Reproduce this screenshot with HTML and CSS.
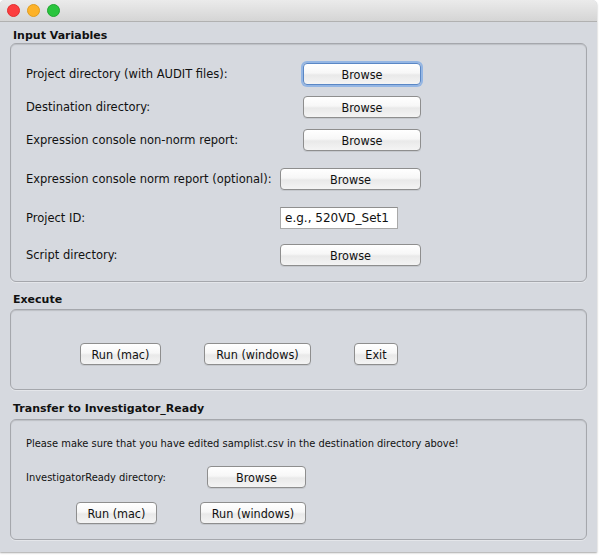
FILE: index.html
```html
<!DOCTYPE html>
<html>
<head>
<meta charset="utf-8">
<link rel="stylesheet" href="styles.css">
</head>
<body>
<div class="window">
  <div class="titlebar">
    <span class="light red"></span>
    <span class="light yellow"></span>
    <span class="light green"></span>
  </div>
  <div class="content">
    <div class="section-title">Input Variables</div>
    <div class="panel panel-input">
      <div class="row r1 wide">
        <span class="label">Project directory (with AUDIT files):</span>
        <button class="btn btn-browse focused">Browse</button>
      </div>
      <div class="row r2 wide">
        <span class="label">Destination directory:</span>
        <button class="btn btn-browse">Browse</button>
      </div>
      <div class="row r3 wide">
        <span class="label">Expression console non-norm report:</span>
        <button class="btn btn-browse">Browse</button>
      </div>
      <div class="row r4 narrow">
        <span class="label">Expression console norm report (optional):</span>
        <button class="btn btn-browse-l">Browse</button>
      </div>
      <div class="row r5 narrow">
        <span class="label">Project ID:</span>
        <input class="field" type="text" value="e.g., 520VD_Set1">
      </div>
      <div class="row r6 narrow">
        <span class="label">Script directory:</span>
        <button class="btn btn-browse-l">Browse</button>
      </div>
    </div>

    <div class="section-title t2">Execute</div>
    <div class="panel panel-exec">
      <button class="btn btn-runmac">Run (mac)</button>
      <button class="btn btn-runwin">Run (windows)</button>
      <button class="btn btn-exit">Exit</button>
    </div>

    <div class="section-title t3">Transfer to Investigator_Ready</div>
    <div class="panel panel-transfer">
      <div class="note">Please make sure that you have edited samplist.csv in the destination directory above!</div>
      <div class="row ir">
        <span class="label cond">InvestigatorReady directory:</span>
        <button class="btn btn-ir">Browse</button>
      </div>
      <div class="row runs">
        <button class="btn btn-runmac2">Run (mac)</button>
        <button class="btn btn-runwin2">Run (windows)</button>
      </div>
    </div>
  </div>
</div>
</body>
</html>
```

FILE: styles.css
```css
html, body {
  margin: 0;
  padding: 0;
  background: #ffffff;
}
body {
  width: 600px;
  height: 555px;
  overflow: hidden;
}
.window {
  width: 597px;
  height: 552px;
  background: #d6d9df;
  border-radius: 5px 5px 0 0;
  box-shadow: 0 1px 2px rgba(0,0,0,0.35);
  overflow: hidden;
}
.titlebar {
  height: 21px;
  background: linear-gradient(#ebebeb, #d5d5d5);
  border-bottom: 1px solid #b1b1b1;
  display: flex;
  align-items: center;
  padding-left: 7px;
  gap: 7px;
}
.light {
  width: 13px;
  height: 13px;
  border-radius: 50%;
  box-sizing: border-box;
}
.red { background: #fc3e3f; border: 1px solid #e0302f; }
.yellow { background: #fdb228; border: 1px solid #df9c1f; }
.green { background: #2ac53e; border: 1px solid #20a530; }

.content {
  padding: 0 10px 0 10px;
  font-family: "DejaVu Sans", sans-serif;
  font-size: 11.5px;
  color: #111;
}
.section-title {
  font-family: "DejaVu Sans", sans-serif;
  font-weight: bold;
  font-size: 11px;
  padding-left: 3px;
  height: 21px;
  line-height: 27px;
}
.t2 { height: 27px; line-height: 36px; }
.t3 { height: 29px; line-height: 38px; }

.panel {
  width: 577px;
  box-sizing: border-box;
  border: 1px solid #a5a7ac;
  border-radius: 6px;
  box-shadow: inset 0 1px 1px rgba(0,0,0,0.12), 0 1px 0 rgba(255,255,255,0.35);
}
.panel-input {
  height: 239px;
  padding: 19px 0 0 15px;
}
.panel-exec {
  height: 81px;
  display: flex;
  align-items: flex-start;
  padding: 33px 0 0 69px;
}
.panel-transfer {
  height: 121px;
  padding: 16px 0 0 15px;
}

.row {
  display: flex;
  align-items: center;
  height: 22px;
}
.wide .label { width: 277px; flex: none; }
.narrow .label { width: 254px; flex: none; }
.r2, .r3 { margin-top: 11px; }
.r4 { margin-top: 17px; }
.r5 { margin-top: 17px; }
.r6 { margin-top: 15px; }

.btn {
  font-family: "DejaVu Sans Condensed", "DejaVu Sans", sans-serif;
  font-size: 12.5px;
  color: #111;
  height: 22px;
  box-sizing: border-box;
  border: 1px solid #8e8e8e;
  border-radius: 4px;
  background: linear-gradient(#ffffff 0%, #f7f7f7 45%, #e9e9e9 55%, #f4f4f4 100%);
  box-shadow: 0 1px 0 rgba(0,0,0,0.08);
  padding: 0;
  margin: 0;
  flex: none;
}
.focused {
  border-color: #5a87c5;
  box-shadow: 0 0 0 2px rgba(125,170,230,0.75);
}
.btn-browse { width: 118px; }
.btn-browse-l { width: 141px; }
.field {
  width: 118px;
  height: 22px;
  box-sizing: border-box;
  border: 1px solid #a9a9a9;
  border-top-color: #8f8f8f;
  background: #fff;
  padding: 0 4px;
  margin: 0;
  font-family: "DejaVu Sans", sans-serif;
  font-size: 12px;
  color: #111;
  outline: none;
}

.btn-runmac { width: 81px; }
.btn-runwin { width: 107px; margin-left: 43px; }
.btn-exit { width: 44px; margin-left: 43px; }

.note {
  font-family: "DejaVu Sans Condensed", "DejaVu Sans", sans-serif;
  font-size: 11px;
  height: 16px;
  line-height: 16px;
}
.ir { margin-top: 14px; }
.ir .label { width: 181px; flex: none; }
.cond {
  font-family: "DejaVu Sans Condensed", "DejaVu Sans", sans-serif;
  font-size: 11px;
}
.btn-ir { width: 99px; }
.runs { margin-top: 14px; padding-left: 50px; }
.btn-runmac2 { width: 81px; }
.btn-runwin2 { width: 106px; margin-left: 43px; }
```
